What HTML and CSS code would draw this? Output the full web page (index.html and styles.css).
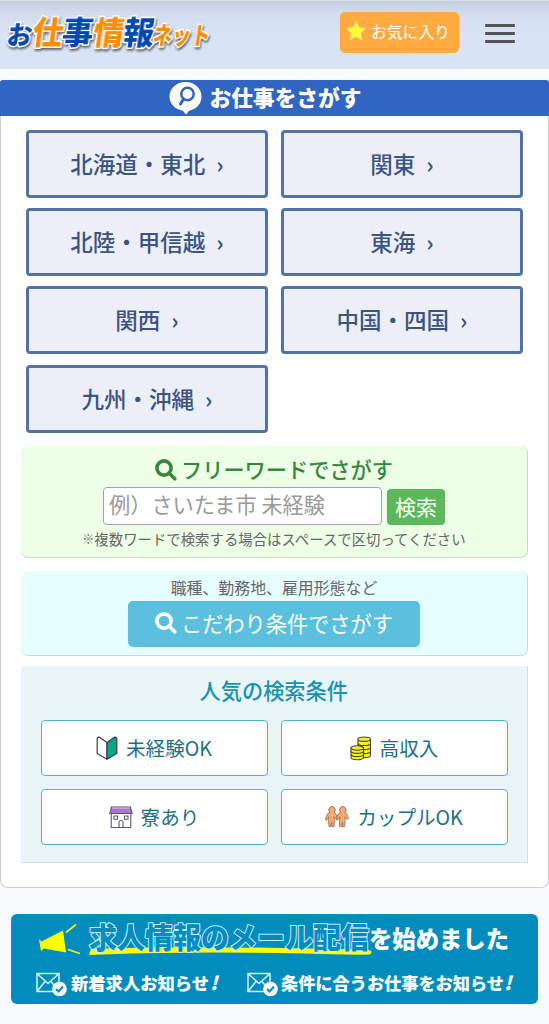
FILE: index.html
```html
<!DOCTYPE html>
<html lang="ja">
<head>
    <meta charset="UTF-8">
    <meta name="viewport" content="width=device-width, initial-scale=1.0">
    <title>お仕事情報ネット</title>
    <link rel="stylesheet" href="styles.css">
</head>
<body>
    <header class="header">
        <a href="#" class="logo">
            <svg width="212" height="44" viewBox="0 0 212 44">
                <g class="logo-text" transform="translate(0 32) skewX(-8)">
                    <text class="blue" x="6" y="0" font-size="25" textLength="25">お</text>
                    <text class="orange" x="31" y="0" font-size="31" textLength="31">仕</text>
                    <text class="blue" x="61" y="0" font-size="31" textLength="31">事</text>
                    <text class="orange" x="92" y="0" font-size="31" textLength="31">情</text>
                    <text class="blue" x="122" y="0" font-size="31" textLength="31">報</text>
                    <text class="orange" x="152" y="0" font-size="24" textLength="57" lengthAdjust="spacingAndGlyphs">ネット</text>
                </g>
            </svg>
        </a>
        <div class="header-right">
            <a href="#" class="favorite">
                <svg width="20" height="20" viewBox="0 0 20 20"><path d="M10 .5l2.900 6.100 6.600.9-4.800 4.600 1.200 6.700-5.900-3.200-5.900 3.200 1.200-6.700L.5 7.500l6.600-.9z" fill="#ffff2e" stroke="#f5e6a0" stroke-width=".7"/></svg>
                <span>お気に入り</span>
            </a>
            <button class="menu" aria-label="メニュー"><i></i><i></i><i></i></button>
        </div>
    </header>

    <main class="card">
        <h1 class="card-title">
            <svg width="34" height="34" viewBox="0 0 34 34">
                <path d="M16.500 1c9 0 16 6.300 16 14.500 0 7.500-5.500 13-12.500 14.200L17.100 33.500l-3.200-3.800C6.500 28.500.5 23 .5 15.500.5 7.300 7.500 1 16.500 1z" fill="#fffaf3"/>
                <circle cx="18.500" cy="13" r="6.200" fill="none" stroke="#3066c1" stroke-width="2.500"/>
                <path d="M14.500 18l-3 5" stroke="#3066c1" stroke-width="3" stroke-linecap="round"/>
            </svg>
            <span>お仕事をさがす</span>
        </h1>

        <nav class="regions">
            <a href="#">北海道・東北<b>›</b></a>
            <a href="#">関東<b>›</b></a>
            <a href="#">北陸・甲信越<b>›</b></a>
            <a href="#">東海<b>›</b></a>
            <a href="#">関西<b>›</b></a>
            <a href="#">中国・四国<b>›</b></a>
            <a href="#">九州・沖縄<b>›</b></a>
        </nav>

        <form class="box freeword">
            <h2>
                <svg class="glass" width="22" height="22" viewBox="0 0 22 22"><circle cx="9" cy="9" r="7.100"/><path d="M14.200 14.200l5.600 5.600"/></svg>
                <span>フリーワードでさがす</span>
            </h2>
            <div class="search-row">
                <input type="text" placeholder="例）さいたま市 未経験">
                <button type="submit">検索</button>
            </div>
            <p><small>※</small>複数ワードで検索する場合はスペースで区切ってください</p>
        </form>

        <section class="box kodawari">
            <p>職種、勤務地、雇用形態など</p>
            <a href="#">
                <svg class="glass" width="22" height="22" viewBox="0 0 22 22"><circle cx="9" cy="9" r="7.100"/><path d="M14.200 14.200l5.600 5.600"/></svg>
                <span>こだわり条件でさがす</span>
            </a>
        </section>

        <section class="popular">
            <h2>人気の検索条件</h2>
            <div class="popular-list">
                <a href="#">
                    <svg width="22" height="24" viewBox="0 0 22 24" stroke="#3c3c4c" stroke-width="1.200" stroke-linejoin="round">
                        <path d="M11 6.500L3.500 1.200Q1.200.8 1.200 3v14.500L11 23.200z" fill="#fff"/>
                        <path d="M11 6.500l7.500-5.300q2.300-.4 2.300 1.800v14.500L11 23.200z" fill="#0aa584"/>
                    </svg>
                    <span>未経験OK</span>
                </a>
                <a href="#">
                    <svg width="22" height="25" viewBox="0 0 22 25" fill="#f3ee30" stroke="#4d4b25" stroke-width="1.100">
                        <path d="M8 3.500v16c0 3 12.500 3 12.500 0v-16"/>
                        <path d="M8 7.500c0 2.700 12.500 2.700 12.500 0M8 11.500c0 2.700 12.500 2.700 12.500 0M8 15.500c0 2.700 12.500 2.700 12.500 0" fill="none"/>
                        <ellipse cx="14.200" cy="3.200" rx="6.300" ry="2.200"/>
                        <path d="M1 12v9.500c0 3 12.500 3 12.500 0V12"/>
                        <path d="M1 15.300c0 2.700 12.500 2.700 12.500 0M1 18.500c0 2.700 12.500 2.700 12.500 0" fill="none"/>
                        <ellipse cx="7.200" cy="12" rx="6.300" ry="2.200"/>
                    </svg>
                    <span>高収入</span>
                </a>
                <a href="#">
                    <svg width="24" height="23" viewBox="0 0 24 23" stroke="#5d566c" stroke-width="1.100" fill="#fff">
                        <path d="M2.200 7h19.600v14.500H2.200z"/>
                        <path d="M2.500 1h19l1.700 6.500H.8z" fill="#a875cf"/>
                        <path d="M3 2h18" stroke="#d9bced"/>
                        <path d="M5 10h3.500v3.300H5zM15.500 10H19v3.300h-3.500zM10 21.500V16q2-3.500 4 0v5.500z"/>
                    </svg>
                    <span>寮あり</span>
                </a>
                <a href="#">
                    <svg width="24" height="22" viewBox="0 0 24 22" fill="#faaa70" stroke="#8d6a55" stroke-width=".8">
                        <path id="person" d="M5 6.300a3.200 3.200 0 1 1 4 0c2 .7 2.600 3 3.600 6.200l-1.600.7-2-2.500.4 5-.6 5H7l-.4-4.500-.6 4.500H4l-.4-5 .4-5-2 3.500-1.600-.7C1.500 9.500 2 7 5 6.300z"/>
                        <use href="#person" x="10.800"/>
                    </svg>
                    <span>カップルOK</span>
                </a>
            </div>
        </section>
    </main>

    <a href="#" class="banner">
        <svg width="527" height="90" viewBox="0 0 527 90">
            <path d="M28 25l2.500 2.500L52 16.500l3 22-22-4-3 2.500z" fill="#ff0"/>
            <path d="M55 18.500l10-8M57 35.500l12 4" stroke="#e8f01a" stroke-width="1.800"/>
            <path d="M80 35Q180 31 357 36q6 1 2 4.500l-10 .3Q180 36 78 41z" fill="#ff0"/>
            <text class="outline" x="78" y="35" font-size="29" textLength="280" lengthAdjust="spacingAndGlyphs">求人情報のメール配信</text>
            <text class="solid" x="358" y="34" font-size="24" textLength="140" lengthAdjust="spacingAndGlyphs">を始めました</text>
            <g id="mail">
                <path d="M26 59.500h22v18H26zM26 59.500l11 10 11-10M26 77.500l8-10M48 77.500l-8-10" fill="none" stroke="#d5f2fb" stroke-width="1.500"/>
                <circle cx="48.500" cy="75" r="7.300" fill="#fff"/>
                <path d="M45 75l2.500 2.500 4.500-5" fill="none" stroke="#008dbe" stroke-width="2"/>
            </g>
            <use href="#mail" x="211"/>
            <text class="solid" x="60" y="76" font-size="17" textLength="138" lengthAdjust="spacingAndGlyphs">新着求人お知らせ</text>
            <text class="solid mark" x="199" y="76" font-size="19">!</text>
            <text class="solid" x="270" y="76" font-size="17" textLength="223" lengthAdjust="spacingAndGlyphs">条件に合うお仕事をお知らせ</text>
            <text class="solid mark" x="493" y="76" font-size="19">!</text>
        </svg>
    </a>
</body>
</html>
```

FILE: styles.css
```css
* {
    box-sizing: border-box;
}
body {
    margin: 0;
    background-color: #f9fbff;
    color: #666;
    font-family: "Noto Sans CJK JP", sans-serif;
}
a {
    text-decoration: none;
}
h1, h2, p {
    margin: 0;
}
svg {
    display: block;
    flex: none;
}
.header {
    display: flex;
    justify-content: space-between;
    height: 69px;
    padding: 11px 34px 0 0;
    border-top: 1px solid #dedede;
    background: linear-gradient(#c4cede 0, #d2dced 12px, #d8e3f5 32px);
}
.logo svg {
    overflow: visible;
}
.logo-text {
    font-weight: 900;
    stroke: #fff;
    stroke-width: 3px;
    stroke-linejoin: round;
    paint-order: stroke;
    filter: drop-shadow(1px 2px 1px #666);
}
.blue {
    fill: #0547ad;
}
.orange {
    fill: #ff8c05;
}
.header-right {
    display: flex;
    align-items: flex-start;
    gap: 26px;
}
.favorite {
    display: flex;
    align-items: center;
    gap: 5px;
    width: 119px;
    height: 41px;
    padding: 0 0 3px 6px;
    border-radius: 5px;
    background-color: #ffab42;
    color: #fff;
    font-size: 15.8px;
    white-space: nowrap;
}
.menu {
    display: grid;
    gap: 5px;
    width: 30px;
    margin-top: 12px;
    padding: 0;
    border: none;
    background: none;
}
.menu i {
    height: 3px;
    border-radius: 1px;
    background-color: #555;
}
.card {
    height: 808.500px;
    margin-top: 10.500px;
    border: 1px solid #ccc;
    border-top: none;
    border-radius: 4px 4px 8px 8px;
    background-color: #fff;
}
.card-title {
    display: flex;
    justify-content: center;
    align-items: center;
    gap: 7px;
    height: 36.500px;
    margin: 0 -1px;
    padding-right: 19px;
    border-radius: 3px 3px 0 0;
    background-color: #3066c1;
    color: #fffaf3;
    font-size: 21.7px;
    font-weight: 900;
    line-height: 34px;
}
.card-title span {
    padding-bottom: 2px;
}
.regions {
    display: grid;
    grid-template-columns: 242px 242px;
    grid-auto-rows: 68px;
    gap: 10.300px 13px;
    padding: 13.800px 25px 13px;
}
.regions a {
    display: flex;
    justify-content: center;
    align-items: center;
    padding-bottom: 2px;
    border: 3px solid #5572a5;
    border-radius: 4px;
    background-color: #eceff7;
    color: #3b5482;
    font-size: 22.5px;
    font-weight: 500;
}
.regions b {
    margin-left: 11px;
    font-weight: 700;
}
.box {
    display: flex;
    flex-direction: column;
    align-items: center;
    margin: 0 20px;
    border-radius: 7px;
}
.box h2, .box a {
    display: flex;
    justify-content: center;
    align-items: center;
    gap: 4px;
    font-size: 21.2px;
}
.box h2 span, .box a span {
    padding-bottom: 2px;
}
.glass {
    fill: none;
    stroke: currentColor;
    stroke-width: 3.6;
    stroke-linecap: round;
}
.freeword {
    height: 112px;
    padding-top: 8px;
    border-right: 1px solid #c2dfb5;
    border-bottom: 1px solid #c2dfb5;
    background-color: #eeffe8;
}
.freeword h2 {
    height: 32px;
    color: #38883b;
    font-weight: 500;
}
.search-row {
    display: flex;
    align-items: flex-end;
    gap: 5px;
    margin-top: 1px;
}
.search-row input {
    width: 279px;
    height: 38px;
    padding: 0 5px 4px;
    border: 1px solid #a5a0ae;
    border-radius: 4px;
    background-color: #fff;
    font: 21.2px "Noto Sans CJK JP", sans-serif;
}
.search-row input::placeholder {
    color: #999;
}
.search-row button {
    width: 58px;
    height: 36px;
    padding: 0 0 2px;
    border: none;
    border-radius: 4px;
    background-color: #5cb85c;
    color: #fff;
    font: 21px/34px "Noto Sans CJK JP", sans-serif;
}
.freeword p {
    margin-top: 3px;
    font-size: 14.4px;
    line-height: 21px;
}
.freeword small {
    font-size: 12px;
    font-weight: 700;
    vertical-align: 1px;
}
.kodawari {
    height: 85px;
    margin-top: 13.500px;
    padding-top: 4px;
    border-right: 1px solid #c2dde2;
    border-bottom: 1px solid #c2dde2;
    background-color: #e6feff;
}
.kodawari p {
    font-size: 15.9px;
    line-height: 26px;
}
.kodawari a {
    width: 292px;
    height: 46px;
    padding-bottom: 2px;
    border-radius: 5px;
    background-color: #5bc0de;
    color: #fff;
}
.popular {
    height: 197px;
    margin: 10px 20px 0;
    padding: 7px 20px 0 19.500px;
    border-right: 1px solid #d0dce8;
    border-bottom: 1px solid #d0dce8;
    background-color: #eaf5f8;
}
.popular h2 {
    color: #1892b3;
    font-size: 21.2px;
    font-weight: 500;
    line-height: 33px;
    text-align: center;
}
.popular-list {
    display: grid;
    grid-template-columns: 227px 227px;
    grid-auto-rows: 56px;
    gap: 13px;
    margin-top: 14px;
}
.popular-list a {
    display: flex;
    justify-content: center;
    align-items: center;
    gap: 8px;
    border: 1px solid #52b1c9;
    border-radius: 4px;
    background-color: #fff;
    color: #207083;
    font-size: 19.6px;
}
.popular-list span {
    padding-bottom: 2px;
}
.banner {
    display: block;
    width: 527px;
    height: 90px;
    margin: 26px 0 0 11px;
    border-radius: 6px;
    background-color: #008dbe;
}
.banner text {
    font-weight: 900;
}
.outline {
    fill: #008dbe;
    stroke: #c9edf8;
    stroke-width: 2px;
    stroke-linejoin: round;
    paint-order: stroke;
}
.solid {
    fill: #fff;
}
.mark {
    font-style: italic;
}
```
